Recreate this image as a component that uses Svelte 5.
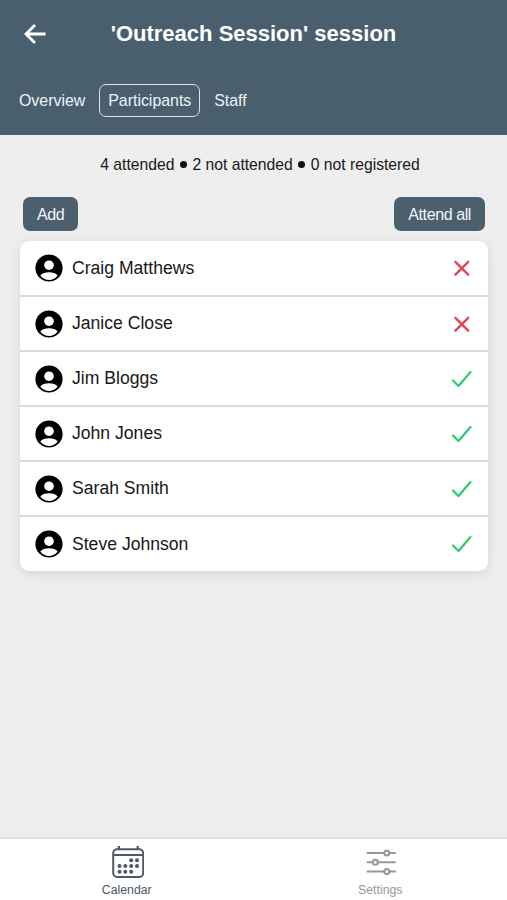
<script lang="ts">
	interface Participant {
		name: string;
		attended: boolean;
	}

	const tabs = ['Overview', 'Participants', 'Staff'];
	let activeTab = $state('Participants');

	let participants = $state<Participant[]>([
		{ name: 'Craig Matthews', attended: false },
		{ name: 'Janice Close', attended: false },
		{ name: 'Jim Bloggs', attended: true },
		{ name: 'John Jones', attended: true },
		{ name: 'Sarah Smith', attended: true },
		{ name: 'Steve Johnson', attended: true }
	]);

	const attended = $derived(participants.filter((p) => p.attended).length);
	const notAttended = $derived(participants.length - attended);

	// Dots on the calendar icon, one [x, y] pair per day.
	const days = [
		[21.2, 15.3], [27, 15.3],
		[9.5, 21], [15.3, 21], [21.2, 21], [27, 21],
		[9.5, 26.7], [15.3, 26.7], [21.2, 26.7]
	];

	function attendAll() {
		for (const p of participants) p.attended = true;
	}
</script>

<div class="page">
	<header>
		<div class="toolbar">
			<button class="back" aria-label="Back">
				<svg viewBox="0 0 24 24" width="24" height="24" fill="none">
					<path d="M12 3L3 12l9 9M3.2 12h19.3" stroke="currentColor" stroke-width="2.8" />
				</svg>
			</button>
			<h1>'Outreach Session' session</h1>
		</div>
		<nav class="tabs">
			{#each tabs as tab}
				<button class="tab" class:active={tab === activeTab} onclick={() => (activeTab = tab)}>{tab}</button>
			{/each}
		</nav>
	</header>

	<main>
		<p class="summary">
			<span>{attended} attended</span>
			<i class="dot"></i>
			<span>{notAttended} not attended</span>
			<i class="dot"></i>
			<span>0 not registered</span>
		</p>

		<div class="actions">
			<button class="action">Add</button>
			<button class="action" onclick={attendAll}>Attend all</button>
		</div>

		<ul class="list">
			{#each participants as p}
				<li>
					<svg viewBox="0 0 28 28" width="28" height="28">
						<circle cx="14" cy="14" r="13.6" />
						<circle cx="14" cy="11.2" r="4.8" fill="#fff" />
						<path d="M5.3 21.6C7 19.4 10.3 18.3 14 18.3s7 1.1 8.7 3.3C20.6 24.6 17.4 26 14 26s-6.6-1.4-8.7-4.4z" fill="#fff" />
					</svg>
					<span class="name">{p.name}</span>
					{#if p.attended}
						<svg class="yes" viewBox="0 0 22 22" width="22" height="22" fill="none">
							<path d="M2 12.5l5.5 5.5L19.5 4" stroke="currentColor" stroke-width="2.2" stroke-linecap="round" stroke-linejoin="round" />
						</svg>
					{:else}
						<svg class="no" viewBox="0 0 22 22" width="22" height="22" fill="none">
							<path d="M4.4 4.8l12.8 12.8M17.2 4.8L4.4 17.6" stroke="currentColor" stroke-width="2.4" stroke-linecap="round" />
						</svg>
					{/if}
				</li>
			{/each}
		</ul>
	</main>

	<footer>
		<button class="nav-item current">
			<svg viewBox="0 0 34 34" width="34" height="34" fill="none" stroke="currentColor">
				<rect x="3.2" y="4.2" width="30" height="27.8" rx="4" stroke-width="2" />
				<path d="M3.2 10h30" stroke-width="2" />
				<path d="M8.9 1v3M27.7 1v3" stroke-width="2.2" />
				{#each days as [x, y]}
					<circle cx={x} cy={y} r="2" fill="currentColor" stroke="none" />
				{/each}
			</svg>
			<span>Calendar</span>
		</button>
		<button class="nav-item">
			<svg viewBox="0 0 34 34" width="34" height="34" fill="none" stroke="currentColor" stroke-width="2" stroke-linecap="round">
				<path d="M4.5 8h16.7M26.4 8H32M4.500 17.200h5.200M14.900 17.200H32M4.500 26.500h16.700M26.400 26.500H32" />
				<circle cx="23.800" cy="8" r="2.500" />
				<circle cx="12.300" cy="17.200" r="2.500" />
				<circle cx="23.800" cy="26.500" r="2.500" />
			</svg>
			<span>Settings</span>
		</button>
	</footer>
</div>

<style>
	:global(body) {
		margin: 0;
	}

	.page {
		display: flex;
		flex-direction: column;
		height: 100vh;
		background: #eee;
		color: #181818;
		font-family: 'Liberation Sans', Arial, sans-serif;
	}

	button {
		margin: 0;
		padding: 0;
		border: 0;
		background: none;
		color: inherit;
		font: inherit;
	}

	svg {
		display: block;
	}

	header {
		box-sizing: border-box;
		height: 135px;
		background: #495f6e;
		color: #fff;
	}

	.toolbar {
		display: grid;
		grid-template-columns: 70px 1fr 70px;
		align-items: center;
		height: 68px;
	}

	.back {
		justify-self: start;
		margin-left: 23px;
	}

	h1 {
		margin: 0;
		font-size: 22px;
		line-height: 28px;
		text-align: center;
		white-space: nowrap;
	}

	.tabs {
		display: flex;
		gap: 5px;
		padding: 16px 10px 0;
	}

	.tab {
		box-sizing: border-box;
		height: 33px;
		padding: 0 8px;
		border: 1.5px solid transparent;
		border-radius: 7px;
		color: #eef4f8;
		font-size: 15.9px;
	}

	.tab.active {
		border-color: #dbe3e8;
	}

	main {
		flex: 1;
		padding: 19px 19px 0 20px;
	}

	.summary {
		display: flex;
		align-items: center;
		justify-content: center;
		gap: 5.5px;
		height: 20px;
		margin: 0 0 23px 12px;
		font-size: 15.7px;
		line-height: 21px;
	}

	.dot {
		width: 7px;
		height: 7px;
		border-radius: 50%;
		background: #111;
	}

	.actions {
		display: flex;
		justify-content: space-between;
		padding: 0 3px;
	}

	.action {
		height: 34px;
		padding: 1px 14px 0;
		border-radius: 7px;
		background: #4b5f6d;
		color: #f2f7fa;
		font-size: 16px;
		letter-spacing: -0.4px;
	}

	.list {
		margin: 10px 0 0;
		padding: 0;
		border-radius: 9px;
		background: #fff;
		box-shadow: 0 3px 12px rgba(0, 0, 0, 0.1);
		list-style: none;
	}

	li {
		box-sizing: border-box;
		display: flex;
		align-items: center;
		height: 55px;
		padding: 0 15px;
		border-bottom: 2px solid #dadada;
	}

	li:first-child {
		height: 56px;
	}

	li:last-child {
		height: 54px;
		border-bottom: 0;
	}

	.name {
		flex: 1;
		margin-left: 9px;
		font-size: 17.6px;
	}

	.yes {
		color: #2dcc70;
	}

	.no {
		color: #e0455c;
	}

	footer {
		box-sizing: border-box;
		display: flex;
		height: 63px;
		border-top: 2px solid #dfdfdf;
		background: #fff;
	}

	.nav-item {
		display: flex;
		flex: 1;
		flex-direction: column;
		align-items: center;
		padding-top: 6px;
		color: #979797;
		font-size: 12.3px;
		line-height: 16px;
	}

	.nav-item span {
		margin-top: 3px;
	}

	.current {
		color: #4b5a67;
	}
</style>
